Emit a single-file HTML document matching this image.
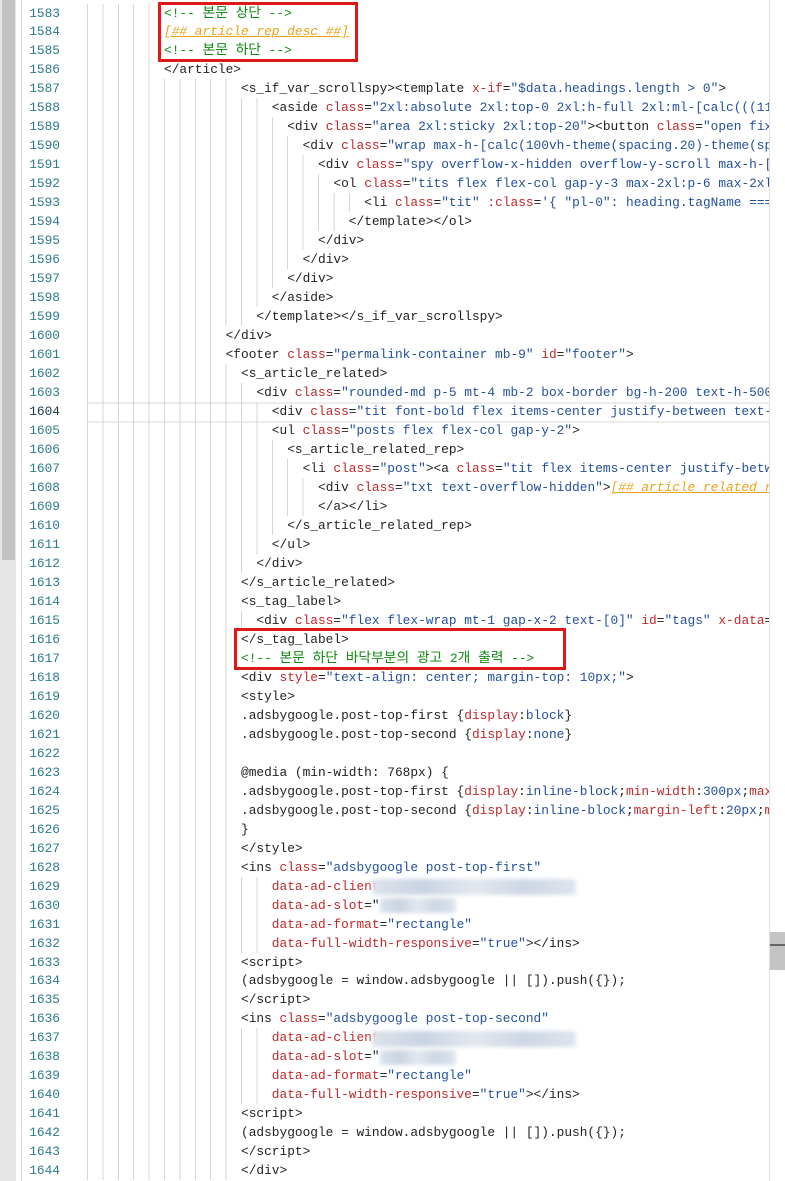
<!DOCTYPE html>
<html><head><meta charset="utf-8"><style>
body{margin:0;width:785px;height:1181px;overflow:hidden;background:#fff;position:relative;font-family:"Liberation Mono","Noto Sans CJK KR",monospace;font-size:12.83px;}
.ls{position:absolute;left:0;top:0;width:16px;height:1181px;background:#e6e6e6;}
.lt{position:absolute;left:2px;top:0;width:13px;height:560px;background:#c2c2c2;}
.gl{position:absolute;left:21px;top:0;width:1px;height:1181px;background:#d8d8d8;}
.rs{position:absolute;left:769px;top:0;width:16px;height:1181px;background:#fff;border-left:1px solid #e0e0e0;}
.rt{position:absolute;left:770px;top:932px;width:15px;height:38px;background:#c4c4c4;}
.rt:after{content:"";position:absolute;left:0;top:12px;width:15px;height:2px;background:#666;}
.row{position:absolute;left:0;height:19px;line-height:19px;white-space:pre;width:769px;overflow:hidden;}
.n{position:absolute;left:22px;width:38px;text-align:right;color:#2b7a8c;}
.g{position:absolute;left:87px;top:0;height:19px;background-image:repeating-linear-gradient(to right,#d6d6d6 0 1px,transparent 1px 15.4px);}
.tx{position:absolute;top:0;color:#222;}
.t{color:#222}.a{color:#c0282a}.v{color:#23509a}.c{color:#118811}.o{color:#e8a317;font-style:italic;text-decoration:underline}
.k{font-size:13.8px}
.box{position:absolute;border:3px solid #e01818;box-sizing:border-box;}
.bl{position:absolute;background:linear-gradient(to right,#dde3ec,#c9d3e2,#e3e8ef,#cdd6e4,#dfe5ee);filter:blur(2px);}
.cur{position:absolute;left:87px;width:682px;height:17px;border-top:2px solid #ececec;border-bottom:2px solid #ececec;}
</style></head><body>
<div class="ls"></div><div class="lt"></div><div class="gl"></div>
<div class="cur" style="top:402px"></div>
<div id="c"></div>
<div class="bl" style="left:372px;top:879px;width:204px;height:16px"></div>
<div class="bl" style="left:380px;top:898px;width:76px;height:15px"></div>
<div class="bl" style="left:372px;top:1031px;width:204px;height:16px"></div>
<div class="bl" style="left:380px;top:1050px;width:76px;height:15px"></div>
<div class="box" style="left:158px;top:2px;width:200px;height:60px"></div>
<div class="box" style="left:234px;top:628px;width:332px;height:42px"></div>
<div class="rs"></div><div class="rt"></div>
<script>
var T=s=>'<span class="t">'+s+'</span>',A=s=>'<span class="a">'+s+'</span>',V=s=>'<span class="v">'+s+'</span>';
function el(tag,attrs,end){var s=T('&lt;'+tag);attrs.forEach(p=>{s+=' '+A(p[0])+'='+V('"'+p[1]+'"');});return s+(end===undefined?T('&gt;'):end);}
var C=s=>'<span class="c">'+s+'</span>',O=s=>'<span class="o">'+s+'</span>',K=s=>'<span class="k">'+s+'</span>';
var L=[
[10,C('&lt;!-- '+K('본문')+' '+K('상단')+' --&gt;')],
[10,O('[##_article_rep_desc_##]')],
[10,C('&lt;!-- '+K('본문')+' '+K('하단')+' --&gt;')],
[10,T('&lt;/article&gt;')],
[20,T('&lt;s_if_var_scrollspy&gt;')+el('template',[['x-if','$data.headings.length &gt; 0']])],
[24,T('&lt;aside ')+A('class')+'='+V('"2xl:absolute 2xl:top-0 2xl:h-full 2xl:ml-[calc(((1100')],
[26,el('div',[['class','area 2xl:sticky 2xl:top-20']])+T('&lt;button ')+A('class')+'='+V('"open fixed')],
[28,T('&lt;div ')+A('class')+'='+V('"wrap max-h-[calc(100vh-theme(spacing.20)-theme(spac')],
[30,T('&lt;div ')+A('class')+'='+V('"spy overflow-x-hidden overflow-y-scroll max-h-[in')],
[32,T('&lt;ol ')+A('class')+'='+V('"tits flex flex-col gap-y-3 max-2xl:p-6 max-2xl:p')],
[36,el('li',[['class','tit']],'')+' '+A(':class')+'='+V("'{ \"pl-0\": heading.tagName === '")],
[34,T('&lt;/template&gt;&lt;/ol&gt;')],
[30,T('&lt;/div&gt;')],[28,T('&lt;/div&gt;')],[26,T('&lt;/div&gt;')],[24,T('&lt;/aside&gt;')],
[22,T('&lt;/template&gt;&lt;/s_if_var_scrollspy&gt;')],
[18,T('&lt;/div&gt;')],
[18,el('footer',[['class','permalink-container mb-9'],['id','footer']])],
[20,T('&lt;s_article_related&gt;')],
[22,T('&lt;div ')+A('class')+'='+V('"rounded-md p-5 mt-4 mb-2 box-border bg-h-200 text-h-500 d')],
[24,T('&lt;div ')+A('class')+'='+V('"tit font-bold flex items-center justify-between text-ov')],
[24,el('ul',[['class','posts flex flex-col gap-y-2']])],
[26,T('&lt;s_article_related_rep&gt;')],
[28,el('li',[['class','post']])+T('&lt;a ')+A('class')+'='+V('"tit flex items-center justify-betwee')],
[30,el('div',[['class','txt text-overflow-hidden']])+O('[##_article_related_r')],
[30,T('&lt;/a&gt;&lt;/li&gt;')],
[26,T('&lt;/s_article_related_rep&gt;')],
[24,T('&lt;/ul&gt;')],[22,T('&lt;/div&gt;')],
[20,T('&lt;/s_article_related&gt;')],
[20,T('&lt;s_tag_label&gt;')],
[22,el('div',[['class','flex flex-wrap mt-1 gap-x-2 text-[0]'],['id','tags']],'')+' '+A('x-data')+'='+V('"t')],
[20,T('&lt;/s_tag_label&gt;')],
[20,C('&lt;!-- '+K('본문')+' '+K('하단')+' '+K('바닥부분의')+' '+K('광고')+' 2'+K('개')+' '+K('출력')+' --&gt;')],
[20,el('div',[['style','text-align: center; margin-top: 10px;']])],
[20,T('&lt;style&gt;')],
[20,'.adsbygoogle.post-top-first {'+A('display')+':'+V('block')+'}'],
[20,'.adsbygoogle.post-top-second {'+A('display')+':'+V('none')+'}'],
[20,''],
[20,'@media (min-width: 768px) {'],
[20,'.adsbygoogle.post-top-first {'+A('display')+':'+V('inline-block')+';'+A('min-width')+':'+V('300px')+';'+A('max-w')],
[20,'.adsbygoogle.post-top-second {'+A('display')+':'+V('inline-block')+';'+A('margin-left')+':'+V('20px')+';'+A('min')],
[20,'}'],
[20,T('&lt;/style&gt;')],
[20,el('ins',[['class','adsbygoogle post-top-first']],'')],
[24,A('data-ad-client')+'='],
[24,A('data-ad-slot')+'="'],
[24,A('data-ad-format')+'='+V('"rectangle"')],
[24,A('data-full-width-responsive')+'='+V('"true"')+T('&gt;&lt;/ins&gt;')],
[20,T('&lt;script&gt;')],
[20,'(adsbygoogle = window.adsbygoogle || []).push({});'],
[20,T('&lt;/script&gt;')],
[20,el('ins',[['class','adsbygoogle post-top-second']],'')],
[24,A('data-ad-client')+'='],
[24,A('data-ad-slot')+'="'],
[24,A('data-ad-format')+'='+V('"rectangle"')],
[24,A('data-full-width-responsive')+'='+V('"true"')+T('&gt;&lt;/ins&gt;')],
[20,T('&lt;script&gt;')],
[20,'(adsbygoogle = window.adsbygoogle || []).push({});'],
[20,T('&lt;/script&gt;')],
[20,T('&lt;/div&gt;')]
];
var h='';
L.forEach((l,i)=>{var top=(3.5+i*18.98).toFixed(2);var ind=l[0];
var gw=Math.max(0,ind*7.7-6);
var nc=(1583+i==1604)?' style="color:#1a3a4a"':'';
h+='<div class="row" style="top:'+top+'px"><span class="n"'+nc+'>'+(1583+i)+'</span><span class="g" style="width:'+gw+'px"></span><span class="tx" style="left:'+(87+ind*7.7)+'px">'+l[1]+'</span></div>';});
document.getElementById('c').innerHTML=h;
</script>
</body></html>
